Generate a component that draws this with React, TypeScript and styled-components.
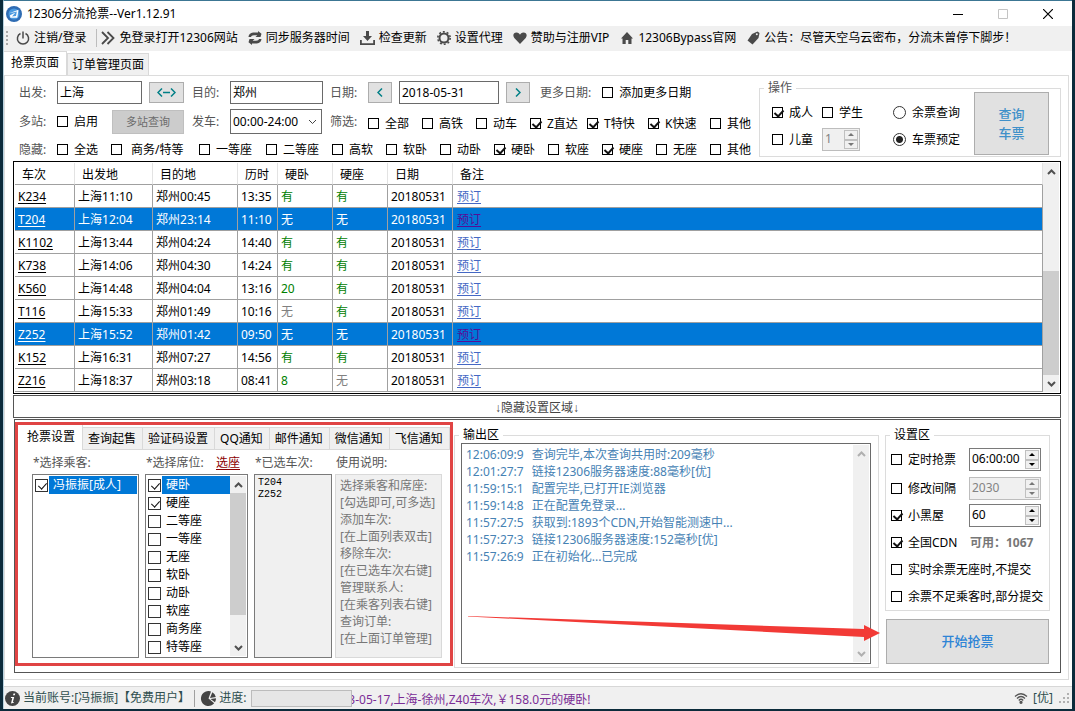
import React from "react";
import styled, { createGlobalStyle, css } from "styled-components";

const GlobalStyle = createGlobalStyle`
  * { box-sizing: border-box; }
  body {
    margin: 0;
    background: #0c2b3b;
    color: #000;
    font: 12px/16px "Noto Sans", "Noto Sans CJK SC", sans-serif;
  }
  button, input, select { font: inherit; color: inherit; margin: 0; }
  ul { list-style: none; margin: 0; padding: 0; }
`;

/* ---------- window frame ---------- */

const Window = styled.div`
  display: flex;
  flex-direction: column;
  min-height: calc(100vh - 2px);
  margin: 0 3px 2px;
  background: #fff;
  border-top: 1px solid #3c7693;
  border-left: 1px solid #b9d3e0;
`;

const TitleBar = styled.header`
  display: flex;
  align-items: center;
  height: 25px;
  padding: 0 2px;
`;

const Title = styled.h1`
  flex: 1;
  margin: 0 0 0 5px;
  font-size: 12px;
  font-weight: 400;
`;

const WindowButton = styled.button`
  width: 45px;
  height: 25px;
  padding: 0;
  border: 0;
  background: none;
  color: #000;
  &:disabled { color: #c4c4c4; }
  svg { display: block; margin: 0 auto; }
`;

const Toolbar = styled.nav`
  display: flex;
  align-items: center;
  height: 25px;
  padding: 0 0 1px 12px;
  gap: 10px;
  background: #f0f0f0;
`;

const Grip = styled.svg`
  flex: none;
  margin: 0 -3px 0 -11px;
`;

const ToolButton = styled.button<{ $divided?: boolean }>`
  display: flex;
  align-items: center;
  gap: 4px;
  height: 18px;
  padding: 0;
  border: 0;
  background: none;
  white-space: nowrap;
  svg { flex: none; }
  ${(p) => p.$divided && css`
    padding-right: 10px;
    border-right: 1px solid #bdbdbd;
    margin-right: -6px;
  `}
`;

const TabStrip = styled.div`
  display: flex;
  align-items: flex-end;
`;

const PageTab = styled.button<{ $active?: boolean }>`
  height: ${(p) => (p.$active ? 25 : 22)}px;
  padding: 0 ${(p) => (p.$active ? 7 : 4)}px ${(p) => (p.$active ? 2 : 0)}px;
  border: 1px solid #d9d9d9;
  border-bottom: 0;
  background: ${(p) => (p.$active ? "#fff" : "#f0f0f0")};
  ${(p) => p.$active && css`
    border-left: 0;
    margin-bottom: -1px;
  `}
`;

const Page = styled.main`
  display: flex;
  flex: 1;
  flex-direction: column;
  margin: 0 3px 6px 0;
  padding: 0 7px 6px 8px;
  border: 1px solid #dcdcdc;
`;

/* ---------- form controls ---------- */

const Tick = styled.input.attrs({ type: "checkbox" })<{ $large?: boolean }>`
  appearance: none;
  display: block;
  position: relative;
  flex: none;
  width: ${(p) => (p.$large ? 13 : 11)}px;
  height: ${(p) => (p.$large ? 13 : 11)}px;
  border: 1px solid ${(p) => (p.$large ? "#333" : "#000")};
  background: #fff;
  &:checked::after {
    content: "";
    position: absolute;
    left: ${(p) => (p.$large ? 4 : 3)}px;
    top: ${(p) => (p.$large ? 1 : 0)}px;
    width: 4px;
    height: 7px;
    border: solid #111;
    border-width: ${(p) => (p.$large ? "0 1px 1px 0" : "0 2px 2px 0")};
    transform: rotate(42deg);
  }
`;

const Radio = styled.input.attrs({ type: "radio" })`
  appearance: none;
  flex: none;
  width: 13px;
  height: 13px;
  border: 1px solid #333;
  border-radius: 50%;
  background: #fff;
  &:checked { background: radial-gradient(circle, #222 3px, #fff 4px); }
`;

const ChoiceLabel = styled.label`
  display: flex;
  align-items: center;
  gap: 6px;
  white-space: pre;
`;

const Check = ({ text, on }: { text: string; on?: boolean }) => (
  <ChoiceLabel>
    <Tick defaultChecked={on} />
    {text}
  </ChoiceLabel>
);

const TextField = styled.input<{ $width: number }>`
  width: ${(p) => p.$width}px;
  height: 23px;
  padding: 0 2px 1px;
  border: 1px solid #6a6a6a;
  background: #fff;
`;

const SelectBox = styled.div`
  position: relative;
  width: 92px;
  svg { position: absolute; right: 5px; top: 10px; pointer-events: none; }
`;

const Select = styled.select`
  appearance: none;
  display: block;
  width: 100%;
  height: 25px;
  padding: 0 2px;
  border: 1px solid #6a6a6a;
  border-radius: 0;
  background: #fff;
`;

const SmallButton = styled.button<{ $width: number }>`
  display: flex;
  align-items: center;
  justify-content: center;
  width: ${(p) => p.$width}px;
  height: 21px;
  padding: 0;
  border: 1px solid #adadad;
  background: #e1e1e1;
  color: #007f86;
`;

const MultiButton = styled.button`
  width: 72px;
  height: 24px;
  margin-left: auto;
  padding: 0;
  border: 1px solid #bfbfbf;
  background: #ccc;
  color: #6d6d6d;
  font-size: 11px;
`;

const ActionButton = styled.button<{ $tone: string }>`
  padding: 0;
  border: 1px solid #adadad;
  background: #e1e1e1;
  color: ${(p) => p.$tone};
  font-size: 13px;
  font-weight: 500;
  line-height: 19px;
`;

const Group = styled.fieldset`
  min-width: 0;
  margin: 0;
  padding: 0;
  border: 1px solid #dcdcdc;
`;

const Legend = styled.legend<{ $muted?: boolean }>`
  height: 8px;
  margin-left: 4px;
  padding: 0 4px;
  line-height: 8px;
  color: ${(p) => (p.$muted ? "#555" : "#000")};
`;

const SpinFrame = styled.div<{ $width: number; $off?: boolean }>`
  display: flex;
  width: ${(p) => p.$width}px;
  height: 23px;
  padding: 1px;
  border: 1px solid ${(p) => (p.$off ? "#bdbdbd" : "#7a7a7a")};
  background: ${(p) => (p.$off ? "#f0f0f0" : "#fff")};
  color: ${(p) => (p.$off ? "#838383" : "#000")};
  input {
    flex: 1;
    min-width: 0;
    padding: 0 0 1px 1px;
    border: 0;
    background: none;
  }
`;

const SpinButtons = styled.div`
  display: grid;
  grid-template-rows: 1fr 1fr;
  width: 14px;
  button {
    display: flex;
    align-items: center;
    justify-content: center;
    min-height: 0;
    padding: 0;
    border: 1px solid #c0c0c0;
    background: #f0f0f0;
  }
`;

const Spinner = ({ label, value, width, off }: { label: string; value: string; width: number; off?: boolean }) => (
  <SpinFrame $width={width} $off={off}>
    <input aria-label={label} defaultValue={value} disabled={off} />
    <SpinButtons>
      <button aria-label={`${label} +`} disabled={off}>
        <svg width="6" height="3"><path d="M0 3L3 0L6 3z" fill={off ? "#777" : "#000"} /></svg>
      </button>
      <button aria-label={`${label} -`} disabled={off}>
        <svg width="6" height="3"><path d="M0 0L3 3L6 0z" fill={off ? "#777" : "#000"} /></svg>
      </button>
    </SpinButtons>
  </SpinFrame>
);

/* ---------- scroll bar ---------- */

const Bar = styled.div<{ $width: number }>`
  display: flex;
  flex: none;
  flex-direction: column;
  width: ${(p) => p.$width}px;
  background: #f0f0f0;
  button {
    display: flex;
    align-items: center;
    justify-content: center;
    height: 17px;
    padding: 0;
    border: 0;
    background: none;
  }
`;

const Track = styled.div<{ $size: number; $thumb?: boolean }>`
  flex: ${(p) => p.$size} 1 0;
  background: ${(p) => (p.$thumb ? "#cdcdcd" : "transparent")};
`;

const ScrollBar = ({ width, parts, color = "#505050" }: { width: number; parts: [number, number, number]; color?: string }) => (
  <Bar $width={width}>
    <button aria-label="向上滚动">
      <svg width="9" height="6"><path d="M1 5L4.500 1.500L8 5" fill="none" stroke={color} strokeWidth="2" /></svg>
    </button>
    <Track $size={parts[0]} />
    <Track $size={parts[1]} $thumb />
    <Track $size={parts[2]} />
    <button aria-label="向下滚动">
      <svg width="9" height="6"><path d="M1 1L4.500 4.500L8 1" fill="none" stroke={color} strokeWidth="2" /></svg>
    </button>
  </Bar>
);

/* ---------- query form ---------- */

const QueryArea = styled.div`
  display: flex;
  justify-content: space-between;
  align-items: flex-start;
  padding: 5px 0 1px 6px;
`;

const QueryRows = styled.div`
  display: grid;
  grid-template-rows: 23px 25px 21px;
  row-gap: 5px;
`;

const QueryRow = styled.div`
  display: grid;
  grid-template-columns: 38px 135px 38px 100px 38px auto;
  align-items: center;
`;

const FieldLabel = styled.label`
  color: #555;
  white-space: nowrap;
`;

const Station = styled.div`
  display: flex;
  align-items: center;
  gap: 7px;
  width: 127px;
`;

const DateFields = styled.div`
  display: flex;
  align-items: center;
  gap: 7px;
`;

const MoreDates = styled.div`
  display: flex;
  align-items: center;
  gap: 11px;
  margin-left: 3px;
`;

const TrainTypes = styled.div`
  display: grid;
  grid-template-columns: 54px 54px 54px 57px 61px 62px auto;
  padding-top: 4px;
`;

const SeatFilter = styled.div`
  display: grid;
  grid-template-columns: 38px 54px 88px 67px 66px repeat(7, 54px) auto;
  align-items: center;
`;

const Operations = styled(Group)`
  width: 302px;
  height: 73px;
  margin-top: 3px;
`;

const OperationBody = styled.div`
  display: grid;
  grid-template-columns: 121px 1fr 75px;
  height: 63px;
  padding: 0 11px 0 12px;
`;

const Passengers = styled.div`
  display: grid;
  grid-template-rows: 23px 23px;
  row-gap: 4px;
  padding-top: 9px;
`;

const Pair = styled.div`
  display: flex;
  align-items: center;
  gap: 9px;
`;

const TRAIN_TYPES: [string, boolean][] = [
  ["全部", false], ["高铁", false], ["动车", false], ["Z直达", true], ["T特快", true], ["K快速", true], ["其他", false],
];

const SEAT_TYPES: [string, boolean][] = [
  ["全选", false], [" 商务/特等", false], ["一等座", false], ["二等座", false], ["高软", false], ["软卧", false],
  ["动卧", false], ["硬卧", true], ["软座", false], ["硬座", true], ["无座", false], ["其他", false],
];

const QueryForm = () => (
  <QueryArea>
    <QueryRows>
      <QueryRow>
        <FieldLabel htmlFor="from">出发:</FieldLabel>
        <Station>
          <TextField id="from" $width={85} defaultValue="上海" />
          <SmallButton $width={35} aria-label="交换">
            <svg width="19" height="9" fill="none" stroke="currentColor" strokeWidth="1.500">
              <path d="M5 .5L1 4.500L5 8.500M14 .5L18 4.500L14 8.500M6 4.500H13" />
            </svg>
          </SmallButton>
        </Station>
        <FieldLabel htmlFor="to">目的:</FieldLabel>
        <TextField id="to" $width={93} defaultValue="郑州" />
        <FieldLabel htmlFor="date">日期:</FieldLabel>
        <DateFields>
          <SmallButton $width={24} aria-label="前一天">
            <svg width="6" height="9" fill="none" stroke="currentColor" strokeWidth="1.500"><path d="M5 .5L1 4.500L5 8.500" /></svg>
          </SmallButton>
          <TextField id="date" $width={100} defaultValue="2018-05-31" />
          <SmallButton $width={24} aria-label="后一天">
            <svg width="6" height="9" fill="none" stroke="currentColor" strokeWidth="1.500"><path d="M1 .5L5 4.500L1 8.500" /></svg>
          </SmallButton>
          <MoreDates>
            <FieldLabel as="span">更多日期:</FieldLabel>
            <Check text="添加更多日期" />
          </MoreDates>
        </DateFields>
      </QueryRow>
      <QueryRow>
        <FieldLabel as="span">多站:</FieldLabel>
        <Station>
          <Check text="启用" />
          <MultiButton disabled>多站查询</MultiButton>
        </Station>
        <FieldLabel htmlFor="depart">发车:</FieldLabel>
        <SelectBox>
          <Select id="depart" defaultValue="00:00-24:00">
            <option>00:00-24:00</option>
          </Select>
          <svg width="9" height="6"><path d="M1 1L4.500 4.500L8 1" fill="none" stroke="#444" /></svg>
        </SelectBox>
        <FieldLabel as="span">筛选:</FieldLabel>
        <TrainTypes>
          {TRAIN_TYPES.map(([text, on]) => <Check key={text} text={text} on={on} />)}
        </TrainTypes>
      </QueryRow>
      <SeatFilter>
        <FieldLabel as="span">隐藏:</FieldLabel>
        {SEAT_TYPES.map(([text, on]) => <Check key={text} text={text} on={on} />)}
      </SeatFilter>
    </QueryRows>
    <Operations>
      <Legend $muted>操作</Legend>
      <OperationBody>
        <Passengers>
          <Pair><Check text="成人" on /><Check text="学生" /></Pair>
          <Pair><Check text="儿童" /><Spinner label="儿童人数" value="1" width={38} off /></Pair>
        </Passengers>
        <Passengers>
          <ChoiceLabel><Radio name="mode" />余票查询</ChoiceLabel>
          <ChoiceLabel><Radio name="mode" defaultChecked />车票预定</ChoiceLabel>
        </Passengers>
        <ActionButton $tone="#3f90c9">查询<br />车票</ActionButton>
      </OperationBody>
    </Operations>
  </QueryArea>
);

/* ---------- train table ---------- */

const TableFrame = styled.div`
  display: flex;
  padding: 1px;
  border: 1px solid #000;
`;

const TrainTable = styled.table`
  flex: 1;
  table-layout: fixed;
  width: 100%;
  border-collapse: separate;
  border-spacing: 0;
  th, td {
    padding: 2px 0 0 3px;
    border-right: 1px solid #a0a0a0;
    border-bottom: 1px solid #a0a0a0;
    text-align: left;
    white-space: nowrap;
  }
  th {
    height: 22px;
    padding-left: 7px;
    border-right-color: #e3e3e3;
    font-weight: 400;
  }
  td { height: 23px; }
  td:last-child { padding-left: 4px; }
`;

const TrainRow = styled.tr<{ $selected?: boolean }>`
  background: ${(p) => (p.$selected ? "#0078d7" : "#fff")};
  color: ${(p) => (p.$selected ? "#fff" : "#000")};
`;

const TrainLink = styled.a`
  color: inherit;
  text-underline-offset: 2px;
`;

const BookLink = styled.a<{ $visited?: boolean }>`
  color: ${(p) => (p.$visited ? "#560c98" : "#4568c4")};
  text-underline-offset: 2px;
`;

const Seats = styled.span<{ $none?: boolean; $selected?: boolean }>`
  color: ${(p) => (p.$selected ? "#fff" : p.$none ? "#808080" : "#008000")};
`;

const COLUMNS: [string, number | undefined][] = [
  ["车次", 60], ["出发地", 78], ["目的地", 85], ["历时", 40], ["硬卧", 55], ["硬座", 55], ["日期", 65], ["备注", undefined],
];

const TRAINS = [
  ["K234", "11:10", "00:45", "13:35", "有", "有"],
  ["T204", "12:04", "23:14", "11:10", "无", "无"],
  ["K1102", "13:44", "04:24", "14:40", "有", "有"],
  ["K738", "14:06", "04:30", "14:24", "有", "有"],
  ["K560", "14:48", "04:04", "13:16", "20", "有"],
  ["T116", "15:33", "01:49", "10:16", "无", "有"],
  ["Z252", "15:52", "01:42", "09:50", "无", "无"],
  ["K152", "16:31", "07:27", "14:56", "有", "有"],
  ["Z216", "18:37", "03:18", "08:41", "8", "无"],
];

const CHOSEN = ["T204", "Z252"];

const Trains = () => (
  <TableFrame>
    <TrainTable>
      <colgroup>
        {COLUMNS.map(([name, width]) => <col key={name} width={width} />)}
      </colgroup>
      <thead>
        <tr>{COLUMNS.map(([name]) => <th key={name}>{name}</th>)}</tr>
      </thead>
      <tbody>
        {TRAINS.map(([no, dep, arr, time, sleeper, seat]) => {
          const selected = CHOSEN.includes(no);
          return (
            <TrainRow key={no} $selected={selected}>
              <td><TrainLink href="#train">{no}</TrainLink></td>
              <td>上海{dep}</td>
              <td>郑州{arr}</td>
              <td>{time}</td>
              <td><Seats $none={sleeper === "无"} $selected={selected}>{sleeper}</Seats></td>
              <td><Seats $none={seat === "无"} $selected={selected}>{seat}</Seats></td>
              <td>20180531</td>
              <td><BookLink href="#book" $visited={selected}>预订</BookLink></td>
            </TrainRow>
          );
        })}
      </tbody>
    </TrainTable>
    <ScrollBar width={16} parts={[91, 105, 0]} />
  </TableFrame>
);

const HideBar = styled.button`
  height: 23px;
  margin: 1px 0;
  padding: 2px 0 0;
  border: 1px solid #555;
  background: #fff;
  color: #444;
  font-family: "Liberation Sans", "Noto Sans CJK SC", sans-serif;
`;

/* ---------- lower area ---------- */

const Lower = styled.section`
  display: grid;
  flex: 1;
  grid-template-columns: 438px minmax(0, 1fr) 165px;
  margin-left: 1px;
  padding: 2px 10px 4px 0;
  border: 1px solid #555;
`;

const GrabSettings = styled.div`
  display: flex;
  flex-direction: column;
  margin-bottom: 2px;
  border: 3px solid #e04444;
`;

const GrabTabs = styled.div`
  display: flex;
  align-items: flex-end;
  height: 25px;
`;

const GrabTab = styled.button<{ $active?: boolean }>`
  height: ${(p) => (p.$active ? 25 : 23)}px;
  padding: ${(p) => (p.$active ? "0 7px 2px 9px" : "0 6px 0 5px")};
  border: 0;
  border-right: 1px solid #d9d9d9;
  background: ${(p) => (p.$active ? "#fff" : "#f0f0f0")};
  white-space: nowrap;
  ${(p) => !p.$active && css`
    border-top: 1px solid #d9d9d9;
    border-bottom: 1px solid #d9d9d9;
  `}
`;

const GrabBody = styled.div`
  display: grid;
  flex: 1;
  grid-template-columns: 113px 109px 81px 107px;
  padding: 5px 0 5px 14px;
`;

const GrabColumn = styled.div<{ $gap?: number }>`
  display: flex;
  flex-direction: column;
  margin-right: ${(p) => p.$gap ?? 0}px;
`;

const ColumnTitle = styled.div`
  display: flex;
  justify-content: space-between;
  height: 19px;
  padding: 0 8px 0 1px;
  color: #555;
  white-space: nowrap;
  a { color: #8b0000; text-underline-offset: 2px; }
`;

const ListBox = styled.div<{ $gray?: boolean }>`
  display: flex;
  flex: 1;
  padding: 1px;
  border: 1px solid #7a7a7a;
  background: ${(p) => (p.$gray ? "#f0f0f0" : "#fff")};
`;

const Items = styled.ul`
  flex: 1;
  padding-left: 1px;
`;

const ItemLabel = styled.label<{ $selected?: boolean }>`
  display: flex;
  align-items: center;
  gap: 1px;
  height: 18px;
  white-space: nowrap;
  span {
    flex: 1;
    padding-left: 4px;
    line-height: 18px;
    background: ${(p) => (p.$selected ? "#0078d7" : "transparent")};
    color: ${(p) => (p.$selected ? "#fff" : "#000")};
  }
`;

const ChosenTrains = styled.ul`
  padding: 1px 2px;
  font: 10px/12px "Liberation Mono", monospace;
`;

const HelpBox = styled.div`
  flex: 1;
  padding: 2px 4px;
  border: 1px solid #d9d9d9;
  background: #f0f0f0;
  color: #777;
  line-height: 17px;
  white-space: pre;
`;

const SEATS: [string, boolean][] = [
  ["硬卧", true], ["硬座", true], ["二等座", false], ["一等座", false], ["无座", false],
  ["软卧", false], ["动卧", false], ["软座", false], ["商务座", false], ["特等座", false],
];

const HELP = `选择乘客和席座:
[勾选即可,可多选]
添加车次:
[在上面列表双击]
移除车次:
[在已选车次右键]
管理联系人:
[在乘客列表右键]
查询订单:
[在上面订单管理]`;

const Grab = () => (
  <GrabSettings>
    <GrabTabs>
      {["抢票设置", "查询起售", "验证码设置", "QQ通知", "邮件通知", "微信通知", "飞信通知"].map((name, i) => (
        <GrabTab key={name} $active={i === 0}>{name}</GrabTab>
      ))}
    </GrabTabs>
    <GrabBody>
      <GrabColumn $gap={6}>
        <ColumnTitle>*选择乘客:</ColumnTitle>
        <ListBox>
          <Items>
            <li><ItemLabel $selected><Tick $large defaultChecked /><span>冯振振[成人]</span></ItemLabel></li>
          </Items>
        </ListBox>
      </GrabColumn>
      <GrabColumn $gap={6}>
        <ColumnTitle>*选择席位: <a href="#seat">选座</a></ColumnTitle>
        <ListBox>
          <Items>
            {SEATS.map(([name, on], i) => (
              <li key={name}>
                <ItemLabel $selected={i === 0}><Tick $large defaultChecked={on} /><span>{name}</span></ItemLabel>
              </li>
            ))}
          </Items>
          <ScrollBar width={16} parts={[0, 122, 24]} />
        </ListBox>
      </GrabColumn>
      <GrabColumn $gap={3}>
        <ColumnTitle>*已选车次:</ColumnTitle>
        <ListBox $gray>
          <ChosenTrains>{CHOSEN.map((no) => <li key={no}>{no}</li>)}</ChosenTrains>
        </ListBox>
      </GrabColumn>
      <GrabColumn>
        <ColumnTitle>使用说明:</ColumnTitle>
        <HelpBox>{HELP}</HelpBox>
      </GrabColumn>
    </GrabBody>
  </GrabSettings>
);

const OutputColumn = styled.div`
  position: relative;
  display: grid;
  margin: 9px 6px 0 1px;
`;

const LogBox = styled.div`
  display: flex;
  height: calc(100% - 7px);
  margin: 4px 7px 3px 6px;
  padding: 1px;
  border: 1px solid #6a6a6a;
`;

const Log = styled.ul`
  flex: 1;
  padding: 1px 3px;
  color: #4682b4;
  line-height: 17px;
  li { display: flex; gap: 8px; }
`;

const Arrow = styled.svg`
  position: absolute;
  left: 14px;
  bottom: 26px;
  width: calc(100% - 12px);
  height: 27px;
  pointer-events: none;
`;

const LOG = [
  ["12:06:09:9", "查询完毕,本次查询共用时:209毫秒"],
  ["12:01:27:7", "链接12306服务器速度:88毫秒[优]"],
  ["11:59:15:1", "配置完毕,已打开IE浏览器"],
  ["11:59:14:8", "正在配置免登录..."],
  ["11:57:27:5", "获取到:1893个CDN,开始智能测速中..."],
  ["11:57:27:3", "链接12306服务器速度:152毫秒[优]"],
  ["11:57:26:9", "正在初始化...已完成"],
];

const Output = () => (
  <OutputColumn>
    <Group>
      <Legend>输出区</Legend>
      <LogBox>
        <Log>
          {LOG.map(([time, text]) => <li key={time}><time>{time}</time><span>{text}</span></li>)}
        </Log>
        <ScrollBar width={16} parts={[1, 0, 0]} color="#b0b0b0" />
      </LogBox>
    </Group>
    <Arrow viewBox="0 0 413 27" preserveAspectRatio="none" aria-hidden>
      <path d="M0 1L396 14V10L412 18L396 26V22L0 1.500z" fill="#f23a36" />
    </Arrow>
  </OutputColumn>
);

const SideColumn = styled.div`
  display: flex;
  flex-direction: column;
  gap: 8px;
  margin-top: 9px;
  padding-bottom: 4px;
`;

const SettingRows = styled.div`
  display: grid;
  grid-template-rows: 29px 27px 27px 27px 27px 27px;
  height: 171px;
  padding: 7px 0 0 5px;
`;

const SettingRow = styled.div`
  display: grid;
  grid-template-columns: 78px auto;
  align-items: center;
  height: 27px;
`;

const Available = styled.strong`
  padding-left: 1px;
  color: #777;
`;

const StartButton = styled(ActionButton)`
  height: 45px;
  margin: 0 1px;
`;

const Side = () => (
  <SideColumn>
    <Group>
      <Legend>设置区</Legend>
      <SettingRows>
        <SettingRow><Check text="定时抢票" /><Spinner label="定时" value="06:00:00" width={72} /></SettingRow>
        <SettingRow><Check text="修改间隔" /><Spinner label="间隔" value="2030" width={72} off /></SettingRow>
        <SettingRow><Check text="小黑屋" on /><Spinner label="小黑屋时长" value="60" width={72} /></SettingRow>
        <SettingRow><Check text="全国CDN" on /><Available>可用：1067</Available></SettingRow>
        <Check text="实时余票无座时,不提交" />
        <Check text="余票不足乘客时,部分提交" />
      </SettingRows>
    </Group>
    <StartButton $tone="#2d84d6">开始抢票</StartButton>
  </SideColumn>
);

/* ---------- status bar ---------- */

const StatusBar = styled.footer`
  display: flex;
  align-items: center;
  height: 23px;
  padding-right: 2px;
  border-top: 1px solid #d7d7d7;
  background: #f0f0f0;
  color: #2f4f4f;
  white-space: nowrap;
`;

const StatusItem = styled.span`
  display: flex;
  align-items: center;
  gap: 2px;
`;

const Account = styled(StatusItem)`
  margin-right: 5px;
  padding-right: 4px;
  border-right: 1px solid #a0a0a0;
`;

const Progress = styled.div`
  z-index: 1;
  width: 101px;
  height: 17px;
  margin: 0 -4px 0 5px;
  border: 1px solid #bcbcbc;
  background: #e6e6e6;
`;

const Ticker = styled.span`
  flex: 1;
  padding-top: 3px;
  color: #7b2d96;
`;

const Network = styled(StatusItem)`
  gap: 5px;
  margin-right: 6px;
`;

const Status = () => (
  <StatusBar>
    <Account>
      <svg width="17" height="17" viewBox="0 0 17 17">
        <circle cx="8.500" cy="8.500" r="7.500" fill="#444" />
        <path d="M9.500 3.500h1.800l-.5 1.800H9zM7 7h3.200l-1.400 5.300 1.200-.3-.2.800-2.800.8 1.300-5.600-1.500.1z" fill="#fff" />
      </svg>
      当前账号:[冯振振]【免费用户】
    </Account>
    <StatusItem>
      <svg width="17" height="17" viewBox="0 0 17 17">
        <path d="M9 1A7.500 7.500 0 1 0 14.200 13.300L8.500 8.500L11 1.400A7.500 7.500 0 0 0 9 1z" fill="#444" />
        <path d="M12.300 2.200L10 8L15.800 7A7 7 0 0 0 12.300 2.200zM10.500 9L16 8.300A7 7 0 0 1 15 12.300z" fill="#444" />
      </svg>
      进度:
    </StatusItem>
    <Progress role="progressbar" />
    <Ticker>3-05-17,上海-徐州,Z40车次,￥158.0元的硬卧!</Ticker>
    <Network>
      <svg width="14" height="12" viewBox="0 0 14 12" fill="none" stroke="#555" strokeWidth="1.300">
        <path d="M1 4.500Q7-1 13 4.500M3 6.500Q7 2.500 11 6.500M4.800 8.500Q7 6 9.200 8.500" />
        <circle cx="7" cy="10.300" r="1" fill="#555" />
      </svg>
      [优]
    </Network>
    <svg width="11" height="11" fill="#b0b0b0">
      <path d="M8 0h2v2h-2zM8 4h2v2h-2zM8 8h2v2h-2zM4 4h2v2h-2zM4 8h2v2h-2zM0 8h2v2h-2z" />
    </svg>
  </StatusBar>
);

/* ---------- toolbar icons ---------- */

const line = { fill: "none", stroke: "#4a4a4a", strokeWidth: 1.5 };

const PowerIcon = () => (
  <svg width="14" height="14" viewBox="0 0 14 14" {...line}>
    <path d="M4.500 2.500A5.600 5.600 0 1 0 9.500 2.500M7 .5V7.500" />
  </svg>
);
const ForwardIcon = () => (
  <svg width="14" height="14" viewBox="0 0 14 14" {...line} strokeWidth="1.800">
    <path d="M1 1L7 7L1 13M6.500 1L12.500 7L6.500 13" />
  </svg>
);
const SyncIcon = () => (
  <svg width="14" height="14" viewBox="0 0 14 14" fill="#4a4a4a">
    <path d="M.5 6C1 2.500 3.500 1.500 6 1.500h4V0l3.500 2.800L12.500 6H7.500L9.300 4.300H6C4 4.300 3.500 5 3 6zM13.500 8c-.5 3.500-3 4.500-5.500 4.500H4V14L.5 11.200 1.500 8h5L4.700 9.700H8c2 0 2.500-.7 3-1.700z" />
  </svg>
);
const DownloadIcon = () => (
  <svg width="15" height="14" viewBox="0 0 15 14" fill="#4a4a4a">
    <path d="M6 0h3v5h3L7.500 10 3 5h3zM0 9h1.800v3.200h11.400V9H15v5H0z" />
  </svg>
);
const GearIcon = () => (
  <svg width="14" height="14" viewBox="0 0 14 14" fill="none" stroke="#4a4a4a">
    <circle cx="7" cy="7" r="4.500" strokeWidth="2" />
    <circle cx="7" cy="7" r="6.200" strokeWidth="1.600" strokeDasharray="1.950 1.950" />
  </svg>
);
const HeartIcon = () => (
  <svg width="14" height="14" viewBox="0 0 14 14" fill="#4a4a4a">
    <path d="M7 13L1.300 7C-.8 4 .8 1.500 3.500 1.500 5.300 1.500 6.500 2.500 7 3.800 7.500 2.500 8.700 1.500 10.500 1.500 13.200 1.500 14.800 4 12.700 7z" />
  </svg>
);
const HomeIcon = () => (
  <svg width="15" height="12" viewBox="-2 0 15 12" fill="#4a4a4a">
    <path d="M6 0L12 6.500H10.500V12H7.300V8H4.700V12H1.500V6.500H0z" />
  </svg>
);
const TagIcon = () => (
  <svg width="14" height="14" viewBox="-1 0 14 14">
    <path d="M5 3L10.500 .5 12.500 2 11.500 7 5.500 13.500.5 9.500z" fill="#4a4a4a" />
    <circle cx="9.800" cy="3.300" r="1" fill="#f0f0f0" />
  </svg>
);

const TOOLS: [React.FC, string][] = [
  [PowerIcon, "注销/登录"],
  [ForwardIcon, "免登录打开12306网站"],
  [SyncIcon, "同步服务器时间"],
  [DownloadIcon, "检查更新"],
  [GearIcon, "设置代理"],
  [HeartIcon, "赞助与注册VIP"],
  [HomeIcon, "12306Bypass官网"],
  [TagIcon, "公告：尽管天空乌云密布，分流未曾停下脚步！"],
];

export default function App() {
  return (
    <>
      <GlobalStyle />
      <Window>
        <TitleBar>
          <svg width="16" height="16" viewBox="0 0 16 16">
            <circle cx="8" cy="8" r="8" fill="#2f6cb3" />
            <circle cx="8" cy="8" r="5.500" fill="#4a9ae0" />
            <path d="M3.200 7.200L12.500 3.700 11.300 11.800H4.300L4 9.300L9.500 6.500L6 10.500L10 10L10.800 5.500z" fill="#fff" />
          </svg>
          <Title>12306分流抢票--Ver1.12.91</Title>
          <WindowButton aria-label="最小化"><svg width="10" height="10"><path d="M0 5.500H10" stroke="currentColor" /></svg></WindowButton>
          <WindowButton aria-label="最大化" disabled><svg width="10" height="10"><path d="M.5 .5H9.500V9.500H.5z" fill="none" stroke="currentColor" /></svg></WindowButton>
          <WindowButton aria-label="关闭"><svg width="10" height="10"><path d="M0 0L10 10M10 0L0 10" stroke="currentColor" strokeWidth="1.200" /></svg></WindowButton>
        </TitleBar>
        <Toolbar>
          <Grip width="4" height="16" fill="#a8a8a8">
            <path d="M1 1h2v2h-2zM1 5h2v2h-2zM1 9h2v2h-2zM1 13h2v2h-2z" />
          </Grip>
          {TOOLS.map(([Icon, text], i) => (
            <ToolButton key={text} $divided={i === 0}><Icon />{text}</ToolButton>
          ))}
        </Toolbar>
        <TabStrip>
          <PageTab $active>抢票页面</PageTab>
          <PageTab>订单管理页面</PageTab>
        </TabStrip>
        <Page>
          <QueryForm />
          <Trains />
          <HideBar>↓隐藏设置区域↓</HideBar>
          <Lower>
            <Grab />
            <Output />
            <Side />
          </Lower>
        </Page>
        <Status />
      </Window>
    </>
  );
}
